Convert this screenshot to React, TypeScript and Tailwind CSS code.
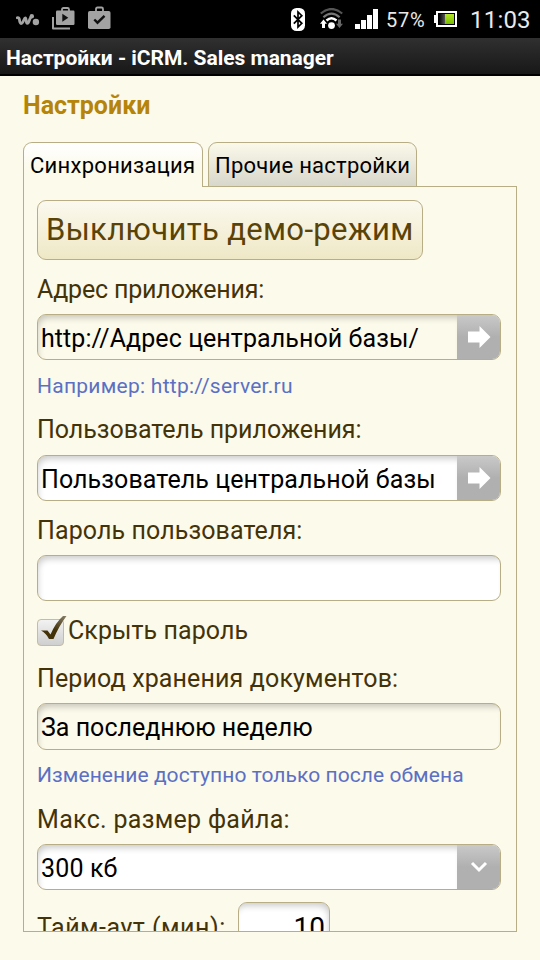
import type { ReactNode } from "react";

function StatusBar() {
  return (
    <header className="flex h-[38px] items-start bg-black font-[Roboto,sans-serif] text-[#e9e9e9]">
      {/* Walkman */}
      <svg className="mt-[13px] ml-[16px] shrink-0" width="24" height="15" viewBox="0 0 24 15">
        <path d="M1.200 4.800C2.600 4.300 3.300 5.300 3.500 7c.2 2 .8 4 2.300 3.300C7.500 9.400 8 4.800 9.300 4.800c1.400 0 .3 5.600 2 5.600C13.300 10.400 13.300 4 16 3.700" fill="none" stroke="#a3a3a3" strokeWidth="2.800" strokeLinecap="round" />
        <circle cx="15.800" cy="3.200" r="2.200" fill="#a3a3a3" />
        <circle cx="19.900" cy="9" r="3.200" fill="#a3a3a3" />
      </svg>
      {/* Play store notification */}
      <svg className="mt-[6px] ml-[12px] shrink-0" width="23" height="24" viewBox="0 0 23 24">
        <path d="M1 11v11.500h17" fill="none" stroke="#a3a3a3" strokeWidth="2" strokeLinejoin="round" />
        <path d="M10 6V3.500Q10 2 11.500 2h4Q17 2 17 3.500V6" fill="none" stroke="#a3a3a3" strokeWidth="1.800" />
        <rect x="4" y="4.500" width="18.500" height="14.500" rx="1.200" fill="#a3a3a3" />
        <path d="M10.300 7.800v8l6-4z" fill="#111" />
      </svg>
      {/* Update installed notification */}
      <svg className="mt-[6px] ml-[13px] shrink-0" width="23" height="24" viewBox="0 0 23 24">
        <path d="M8 6V3Q8 1.500 9.500 1.500h4Q15 1.500 15 3v3" fill="none" stroke="#a3a3a3" strokeWidth="1.800" />
        <rect x="0" y="5" width="22.500" height="18" rx="1.800" fill="#a3a3a3" />
        <path d="M6.300 13.500l3.200 3.200 7-6.800" fill="none" stroke="#111" strokeWidth="2.400" />
      </svg>
      <div className="grow" />
      {/* Bluetooth */}
      <svg className="mt-[8px] shrink-0" width="15" height="23" viewBox="0 0 15 23">
        <rect width="14" height="23" rx="5.500" fill="#fff" />
        <path d="M2.800 7.300l8 8L7 19V4l3.800 3.700-8 8" fill="none" stroke="#000" strokeWidth="1.700" />
      </svg>
      {/* Wi-Fi */}
      <svg className="mt-[8px] ml-[14px] shrink-0" width="23" height="22" viewBox="0 0 23 22">
        <path d="M.8 5.500Q11.500-3.500 22.200 5.500" fill="none" stroke="#555" strokeWidth="2.200" />
        <path d="M3.400 9.200Q11.500 2 19.600 9.200" fill="none" stroke="#777" strokeWidth="2.200" />
        <path d="M6.500 12.500Q11.500 8 16.500 12.500" fill="none" stroke="#fff" strokeWidth="2.400" />
        <circle cx="11.500" cy="17.600" r="3.400" fill="#fff" />
        <path d="M3.500 11.500l3.500 4.300H5V20H2v-4.200H0z" fill="#fff" />
        <path d="M19.500 20L16 15.700h2v-4.200h3v4.200h2z" fill="#666" />
      </svg>
      {/* Signal strength */}
      <svg className="mt-[9px] ml-[12px] shrink-0" width="23" height="20" viewBox="0 0 23 20">
        <path d="M0 15h5v5H0zM6 11h5v9H6zM12 6h5v14h-5zM18 0h5v20h-5z" fill="#fff" />
      </svg>
      <span className="mt-[7px] ml-[8px] w-[40px] text-[20px] leading-[26px] tracking-[0.8px] whitespace-nowrap">57%</span>
      {/* Battery */}
      <svg className="mt-[11px] ml-[8px] shrink-0" width="23" height="16" viewBox="0 0 23 16">
        <defs>
          <linearGradient id="empty" x2="1">
            <stop stopColor="#000" />
            <stop offset="1" stopColor="#555" />
          </linearGradient>
          <linearGradient id="charge" x2="0" y2="1">
            <stop stopColor="#b4e52a" />
            <stop offset="1" stopColor="#77bd00" />
          </linearGradient>
        </defs>
        <path d="M0 4h2V0h21v16H2v-4H0z" fill="#fff" />
        <rect x="4" y="2" width="17" height="12" fill="#000" />
        <rect x="5" y="3" width="6" height="10" fill="url(#empty)" />
        <rect x="11" y="3" width="9" height="10" fill="url(#charge)" />
      </svg>
      <span className="mt-[5px] ml-[13px] w-[70px] text-[24px] leading-[30px] tracking-[0.2px] whitespace-nowrap">11:03</span>
    </header>
  );
}

function Label({ className, children }: { className: string; children: ReactNode }) {
  return <div className={`h-[30px] text-[25px] leading-[32px] whitespace-nowrap text-[#443308] ${className}`}>{children}</div>;
}

function Hint({ className, children }: { className: string; children: ReactNode }) {
  return <div className={`h-[26px] text-[21px] leading-[26px] whitespace-nowrap text-[#5b70c4] ${className}`}>{children}</div>;
}

function ArrowIcon() {
  return (
    <svg width="24" height="24" viewBox="0 0 24 24">
      <path d="M1 6.500h11.500V1L23.500 12l-11 11v-5.500H1z" fill="#fff" />
    </svg>
  );
}

function ChevronIcon() {
  return (
    <svg width="18" height="12" viewBox="0 0 18 12">
      <path d="M2 2l7 7 7-7" fill="none" stroke="#fff" strokeWidth="3" />
    </svg>
  );
}

function Field({ className, children, action }: { className: string; children?: ReactNode; action?: ReactNode }) {
  return (
    <div className={`flex w-[464px] overflow-hidden rounded-[9px] border border-[#b8ae86] ${className}`}>
      <div className="grow rounded-l-[8px] pt-[9px] pl-[3px] text-[25px] leading-[30px] whitespace-nowrap text-black shadow-[inset_2px_5px_6px_-2px_rgba(0,0,0,0.2)]">
        {children}
      </div>
      {action && (
        <div className="flex w-[43px] shrink-0 items-center justify-center bg-linear-to-b from-[#c9c9c9] to-[#b0b0b0] to-50%">{action}</div>
      )}
    </div>
  );
}

function CheckBox() {
  return (
    <svg className="shrink-0" width="31" height="32" viewBox="0 0 31 32">
      <defs>
        <linearGradient id="box" x2="0" y2="1">
          <stop stopColor="#f3f3f3" />
          <stop offset="1" stopColor="#cecece" />
        </linearGradient>
        <linearGradient id="tick" x1="1" x2="0.300" y2="1">
          <stop stopColor="#88806a" />
          <stop offset="0.600" stopColor="#443308" />
        </linearGradient>
      </defs>
      <rect x=".5" y="4.500" width="26" height="26" rx="3.500" fill="url(#box)" stroke="#c4bda0" />
      <path d="M4 15.500h6.500l3 4Q19 7 26 1h3.500Q22 11 16.500 24h-4.500Q9 18 4 15.500z" fill="url(#tick)" />
    </svg>
  );
}

export default function App() {
  return (
    <div className="flex h-[960px] w-[540px] flex-col overflow-hidden bg-[#fcfaeb] font-[Roboto,sans-serif]">
      <StatusBar />
      <div className="h-[38px] border-b-2 border-black bg-linear-to-b from-[#303030] to-[#181818] pl-[6px] text-[21px] leading-[40px] font-bold tracking-[-0.03px] whitespace-nowrap text-white">
        Настройки - iCRM. Sales manager
      </div>
      <main className="flex flex-col pl-[23px]">
        <h1 className="mt-[15px] h-[30px] text-[25px] leading-[30px] font-bold text-[#b58409]">Настройки</h1>
        <nav className="relative z-10 mt-[21px] -mb-px flex h-[45px] gap-[5px] text-[22px] leading-[30px] whitespace-nowrap text-black">
          <div className="w-[180px] rounded-t-[9px] border border-b-0 border-[#b8ae86] bg-linear-to-b from-white to-[#fcfaeb] to-60% pt-[8px] pl-[6px] tracking-[0.27px]">
            Синхронизация
          </div>
          <div className="w-[209px] rounded-t-[9px] border border-[#b8ae86] bg-linear-to-b from-[#fbf9ea] to-[#d8d7cb] pt-[8px] pl-[6px] tracking-[0.25px]">
            Прочие настройки
          </div>
        </nav>
        <section className="h-[746px] w-[494px] overflow-hidden border border-[#b8ae86] pl-[13px]">
          <div className="mt-[13px] h-[60px] w-[386px] rounded-[9px] border border-[#b8ae86] bg-linear-to-b from-[#fbf9ef] to-[#efe8c6] pl-[8px] text-[31px] leading-[58px] tracking-[0.36px] whitespace-nowrap text-[#5a4307]">
            Выключить демо-режим
          </div>
          <Label className="mt-[14px] tracking-[-0.17px]">Адрес приложения:</Label>
          <Field className="mt-[10px] h-[46px] bg-[#fcfaeb]" action={<ArrowIcon />}>
            <span className="tracking-[0.08px]">http://Адрес центральной базы/</span>
          </Field>
          <Hint className="mt-[13px] tracking-[0.26px]">Например: http://server.ru</Hint>
          <Label className="mt-[15px] tracking-[-0.03px]">Пользователь приложения:</Label>
          <Field className="mt-[11px] h-[46px] bg-white" action={<ArrowIcon />}>
            <span className="tracking-[0.09px]">Пользователь центральной базы</span>
          </Field>
          <Label className="mt-[14px] tracking-[0.1px]">Пароль пользователя:</Label>
          <Field className="mt-[10px] h-[46px] bg-white" />
          <div className="mt-[14px] flex h-[32px]">
            <CheckBox />
            <Label className="tracking-[0.07px]">Скрыть пароль</Label>
          </div>
          <Label className="mt-[16px] tracking-[0.13px]">Период хранения документов:</Label>
          <Field className="mt-[10px] h-[47px] bg-[#fcfaeb]">
            <span className="tracking-[0.01px]">За последнюю неделю</span>
          </Field>
          <Hint className="mt-[12px] tracking-[0.07px]">Изменение доступно только после обмена</Hint>
          <Label className="mt-[16px] tracking-[0.3px]">Макс. размер файла:</Label>
          <Field className="mt-[10px] h-[46px] bg-white" action={<ChevronIcon />}>
            <span className="tracking-[0.15px]">300 кб</span>
          </Field>
          <div className="mt-[12px] flex">
            <Label className="mt-[10px] w-[201px] tracking-[0.5px]">Тайм-аут (мин):</Label>
            <div className="h-[46px] w-[92px] rounded-[9px] border border-[#b8ae86] bg-white pt-[10px] pr-[4px] text-right text-[28px] leading-[30px] text-black shadow-[inset_-2px_5px_6px_-2px_rgba(0,0,0,0.2)]">
              10
            </div>
          </div>
        </section>
      </main>
    </div>
  );
}
